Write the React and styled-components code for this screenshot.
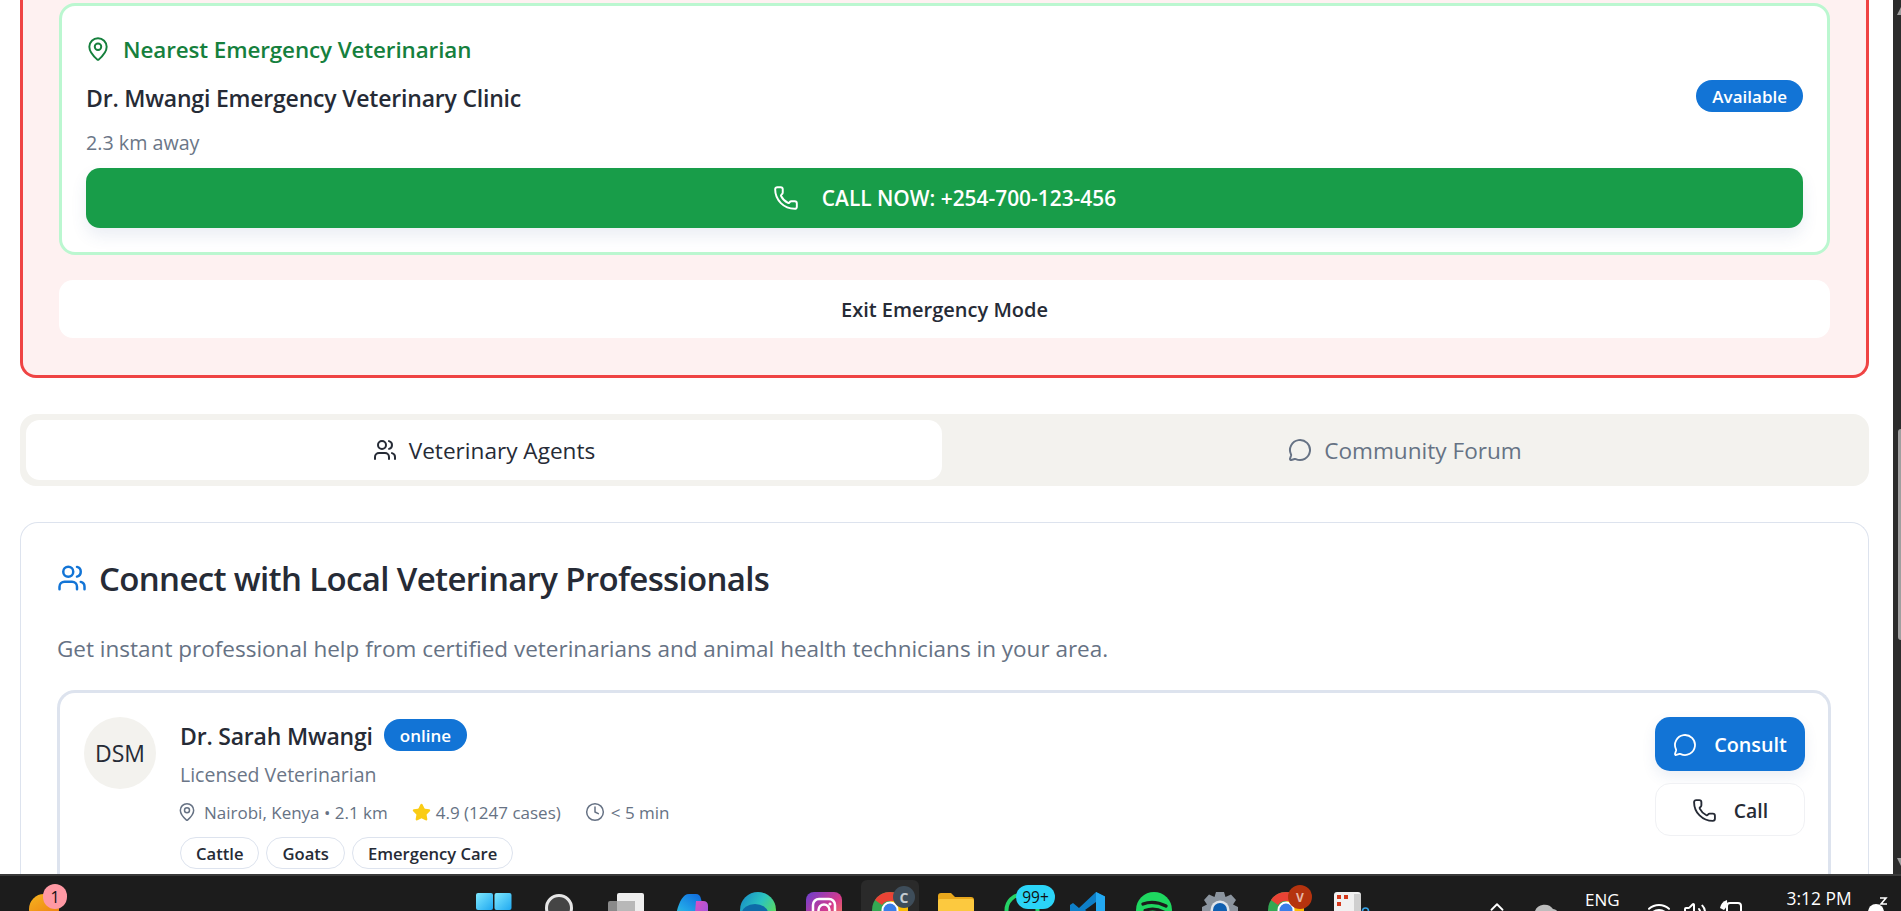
import React from 'react';
import styled, { createGlobalStyle } from 'styled-components';
import { MapPin, Phone, Users, MessageCircle, Clock, Star, Wifi, Volume2, ChevronUp } from 'lucide-react';

const GlobalStyle = createGlobalStyle`
  html, body {
    margin: 0;
    height: 100%;
    overflow: hidden;
    background: #fff;
  }
  * { box-sizing: border-box; }
  svg { flex: none; display: block; }
  body {
    font-family: "Open Sans", "Noto Sans", sans-serif;
    color: #262b36;
  }
`;

const Screen = styled.div`
  width: 1901px;
  height: 911px;
  display: flex;
  flex-direction: column;
  overflow: hidden;
`;

const Viewport = styled.div`
  flex: none;
  height: 874px;
  display: flex;
  overflow: hidden;
`;

const Page = styled.main`
  width: 1893px;
  padding: 0 24px 0 20px;
  display: flex;
  flex-direction: column;
`;

const Scrollbar = styled.div`
  width: 8px;
  background: #2c2c2c;
  flex: none;
  position: relative;
`;

const ScrollThumb = styled.div`
  position: absolute;
  left: 5px;
  top: 429px;
  width: 3px;
  height: 211px;
  border-radius: 3px 0 0 3px;
  background: #9f9f9f;
`;

const ScrollArrow = styled.div`
  position: absolute;
  left: 4px;
  top: ${p => p.$top}px;
  width: 4px;
  height: 8px;
  background: #9f9f9f;
  clip-path: ${p => (p.$down ? 'polygon(0 0, 100% 0, 100% 100%)' : 'polygon(100% 0, 100% 100%, 0 100%)')};
`;

const EmergencyPanel = styled.section`
  background: #fef1f1;
  border: 3px solid #ef4444;
  border-top: 0;
  border-radius: 0 0 16px 16px;
  padding: 3px 36px 37px;
  display: flex;
  flex-direction: column;
  gap: 25px;
`;

const VetCard = styled.div`
  background: #fff;
  border: 3px solid #bbf7d0;
  border-radius: 16px;
  padding: 24px;
  height: 252px;
`;

const VetTitle = styled.h3`
  margin: 0;
  height: 38px;
  display: flex;
  align-items: center;
  gap: 12px;
  font-size: 22.4px;
  font-weight: 600;
  color: #15803d;
  letter-spacing: -0.1px;

  svg { margin-left: -1px; }
`;

const VetRow = styled.div`
  margin-top: 12px;
  height: 32px;
  display: flex;
  align-items: center;
  justify-content: space-between;
`;

const ClinicName = styled.div`
  padding-top: 4px;
  line-height: 26px;
  font-size: 23px;
  font-weight: 600;
  letter-spacing: -0.2px;
`;

const Pill = styled.span`
  height: 32px;
  padding: 0 16px;
  border-radius: 16px;
  background: #1274d6;
  color: #fff;
  font-size: 17px;
  font-weight: 600;
  display: inline-flex;
  align-items: center;
`;

const Distance = styled.div`
  margin-top: 18px;
  height: 26px;
  line-height: 26px;
  font-size: 19.7px;
  color: #6b7687;
`;

const CallNow = styled.button`
  margin-top: 12px;
  width: 100%;
  height: 60px;
  border: 0;
  border-radius: 14px;
  background: #189d49;
  color: #fff;
  font: 600 20.9px "Open Sans", sans-serif;
  display: flex;
  align-items: center;
  justify-content: center;
  gap: 23px;
  box-shadow: 0 8px 16px rgba(60, 90, 150, 0.1);
`;

const ExitButton = styled.button`
  height: 58px;
  border: 0;
  border-radius: 14px;
  background: #fff;
  color: #262b36;
  padding-top: 2px;
  font: 600 20px "Open Sans", sans-serif;
`;

const Tabs = styled.div`
  margin-top: 36px;
  height: 72px;
  padding: 6px;
  background: #f3f2ee;
  border-radius: 16px;
  display: grid;
  grid-template-columns: 916px 1fr;
`;

const Tab = styled.div`
  border-radius: 14px;
  padding-left: ${p => (p.$active ? '0' : '5px')};
  background: ${p => (p.$active ? '#fff' : 'transparent')};
  color: ${p => (p.$active ? '#262b36' : '#667284')};
  display: flex;
  align-items: center;
  justify-content: center;
  gap: 12px;
  font-size: 22.6px;
`;

const AgentsPanel = styled.section`
  margin-top: 36px;
  flex: 1;
  border: 1px solid #dde3ee;
  border-bottom: 0;
  border-radius: 18px 18px 0 0;
  padding: 34px 37px 0 36px;
  display: flex;
  flex-direction: column;
`;

const PanelTitle = styled.h2`
  margin: 0;
  height: 42px;
  display: flex;
  align-items: center;
  gap: 12px;
  font-size: 33px;
  font-weight: 600;
  letter-spacing: -0.65px;
`;

const PanelText = styled.p`
  margin: 35px 0 0;
  height: 30px;
  line-height: 30px;
  font-size: 22.5px;
  color: #667284;
`;

const AgentCard = styled.article`
  margin-top: 26px;
  flex: 1;
  border: 3px solid #dde3ee;
  border-bottom: 0;
  border-radius: 18px 18px 0 0;
  padding: 24px 23px 0 24px;
  display: flex;
  gap: 24px;
`;

const Avatar = styled.div`
  flex: none;
  width: 72px;
  height: 72px;
  border-radius: 50%;
  background: #f3f2ee;
  display: flex;
  align-items: center;
  justify-content: center;
  font-size: 23px;
`;

const AgentBody = styled.div`
  flex: 1;
`;

const NameRow = styled.div`
  height: 32px;
  margin-top: 2px;
  display: flex;
  align-items: center;
  gap: 11px;
`;

const AgentName = styled.div`
  font-size: 23px;
  font-weight: 600;
  letter-spacing: -0.2px;
  padding-top: 1px;
`;

const Role = styled.div`
  margin-top: 11px;
  font-size: 19.5px;
  line-height: 26px;
  color: #6b7687;
`;

const MetaRow = styled.div`
  margin-top: 12px;
  height: 24px;
  display: flex;
  align-items: center;
  gap: 24px;
  font-size: 17px;
  color: #667284;
`;

const Meta = styled.span`
  display: flex;
  align-items: center;
  gap: ${p => p.$gap || 6}px;
  margin-left: ${p => p.$shift || 0}px;
`;

const TagRow = styled.div`
  margin-top: 13px;
  display: flex;
  gap: 7px;
`;

const Tag = styled.span`
  height: 32px;
  padding: 0 15px;
  border: 1px solid #dde3ee;
  border-radius: 16px;
  display: flex;
  align-items: center;
  font-size: 16.6px;
  font-weight: 600;
`;

const Actions = styled.div`
  flex: none;
  width: 150px;
  display: flex;
  flex-direction: column;
  gap: 12px;
`;

const ActionButton = styled.button`
  height: ${p => (p.$primary ? '54px' : '53px')};
  padding: 1px 0 0;
  border-radius: 15px;
  border: ${p => (p.$primary ? '0' : '1px solid #f0f1f4')};
  background: ${p => (p.$primary ? '#1274d6' : '#fff')};
  color: ${p => (p.$primary ? '#fff' : '#262b36')};
  font: 600 ${p => (p.$primary ? '19.8px' : '19.4px')} "Open Sans", sans-serif;
  display: flex;
  align-items: center;
  justify-content: center;
  gap: 17px;
  box-shadow: ${p => (p.$primary ? '0 6px 14px rgba(60, 90, 150, 0.1)' : 'none')};
`;

const Taskbar = styled.footer`
  flex: none;
  height: 37px;
  background: #1c1c1c;
  border-top: 2px solid #3a3a3a;
  overflow: hidden;
  display: flex;
  color: #fff;
`;

const WeatherSlot = styled.div`
  flex: none;
  width: 476px;
  padding: 18px 0 0 29px;
`;

const AppStrip = styled.div`
  flex: none;
  width: 1010px;
  padding-top: 16px;
  display: flex;
  gap: 30px;
`;

const AppSlot = styled.div`
  flex: none;
  width: 36px;
  height: 36px;
  position: relative;
`;

const AppGlyph = styled.div`
  position: relative;
`;

const ChromeHover = styled.div`
  position: absolute;
  left: -11px;
  top: -12px;
  width: 58px;
  height: 48px;
  border-radius: 6px;
  background: #2a2a2a;
`;

const CountBadge = styled.span`
  position: absolute;
  z-index: 1;
  top: ${p => p.$top}px;
  left: ${p => p.$left}px;
  min-width: ${p => p.$size}px;
  height: ${p => p.$height || p.$size}px;
  border-radius: 12px;
  background: ${p => p.$bg};
  color: ${p => p.$fg};
  font-family: "Open Sans", sans-serif;
  font-size: ${p => p.$font}px;
  font-weight: ${p => p.$weight || 400};
  display: flex;
  align-items: center;
  justify-content: center;
`;

const Tray = styled.div`
  flex: 1;
  display: flex;
  color: #fff;
`;

const TrayIcon = styled.div`
  flex: none;
  width: ${p => p.$width}px;
  margin-left: ${p => p.$gap}px;
  padding-top: ${p => p.$top}px;
`;

const TrayText = styled.div`
  flex: none;
  margin-left: ${p => p.$gap}px;
  padding-top: ${p => p.$top}px;
  font-family: "Open Sans", sans-serif;
  font-size: ${p => p.$size}px;
  line-height: 20px;
  white-space: nowrap;
`;

// Taskbar app icons, only the top part is visible above the screen edge
const WindowsLogo = () => (
  <svg width="36" height="36" viewBox="0 0 36 36">
    <defs>
      <linearGradient id="winTile" x1="0" y1="0" x2="1" y2="1">
        <stop offset="0" stopColor="#7fe9ff" />
        <stop offset="1" stopColor="#1fa8f0" />
      </linearGradient>
    </defs>
    <rect x="0" y="1" width="17" height="17" rx="2" fill="url(#winTile)" />
    <rect x="18.5" y="1" width="17" height="17" rx="2" fill="url(#winTile)" />
    <rect x="0" y="19.5" width="17" height="16" fill="url(#winTile)" />
    <rect x="18.5" y="19.5" width="17" height="16" fill="url(#winTile)" />
  </svg>
);

const SearchRing = () => (
  <svg width="36" height="36" viewBox="0 0 36 36">
    <circle cx="17" cy="16" r="12.5" fill="#454545" stroke="#e6e6e6" strokeWidth="3" />
  </svg>
);

const TaskView = () => (
  <svg width="36" height="36" viewBox="0 0 36 36">
    <rect x="9" y="1" width="27" height="30" rx="2" fill="#eeeeee" />
    <rect x="0" y="9" width="27" height="22" rx="2" fill="#8a8a8a" />
    <rect x="9" y="9" width="18" height="22" fill="#b8b8b8" />
  </svg>
);

const Copilot = () => (
  <svg width="36" height="36" viewBox="0 0 36 36">
    <defs>
      <linearGradient id="copA" x1="0.7" y1="0" x2="0" y2="1">
        <stop offset="0" stopColor="#1272e0" />
        <stop offset="0.5" stopColor="#22a8e8" />
        <stop offset="1" stopColor="#5fd89a" />
      </linearGradient>
      <linearGradient id="copB" x1="0" y1="0" x2="1" y2="1">
        <stop offset="0" stopColor="#e04fc0" />
        <stop offset="1" stopColor="#8a5ae8" />
      </linearGradient>
    </defs>
    <path d="M0 34 C2 20 6 2 15 2 L22 2 Q26 2 27 7 L30 18 L16 34 Z" fill="url(#copA)" />
    <path d="M22 9 L29 9 Q34 9 34 14 L34 34 L20 34 Z" fill="url(#copB)" />
  </svg>
);

const Edge = () => (
  <svg width="36" height="36" viewBox="0 0 36 36">
    <defs>
      <linearGradient id="edgeA" x1="0" y1="0" x2="1" y2="0.6">
        <stop offset="0" stopColor="#1587c8" />
        <stop offset="0.55" stopColor="#2bc3c0" />
        <stop offset="1" stopColor="#5fdc58" />
      </linearGradient>
    </defs>
    <circle cx="18" cy="18" r="18" fill="url(#edgeA)" />
    <ellipse cx="15" cy="21" rx="13" ry="9" fill="#0e6aa8" />
    <circle cx="18" cy="26" r="5" fill="#1c1c1c" />
  </svg>
);

const Instagram = () => (
  <svg width="36" height="36" viewBox="0 0 36 36">
    <defs>
      <linearGradient id="instaA" x1="0" y1="0" x2="1" y2="1">
        <stop offset="0" stopColor="#6a3fd0" />
        <stop offset="0.55" stopColor="#d63a8c" />
        <stop offset="1" stopColor="#f8a040" />
      </linearGradient>
    </defs>
    <rect width="36" height="36" rx="8" fill="url(#instaA)" />
    <rect x="7" y="7" width="22" height="22" rx="6" fill="none" stroke="#fff" strokeWidth="2.5" />
    <circle cx="18" cy="18" r="5.5" fill="none" stroke="#fff" strokeWidth="2.5" />
    <circle cx="24" cy="12" r="1.6" fill="#fff" />
  </svg>
);

const Chrome = () => (
  <svg width="36" height="36" viewBox="0 0 36 36">
    <circle cx="18" cy="18" r="18" fill="#34a853" />
    <path d="M18 0 A18 18 0 0 1 33.6 9 L18 9 A9 9 0 0 0 10 13 L3 8 A18 18 0 0 1 18 0 Z" fill="#ea4335" />
    <path d="M33.6 9 A18 18 0 0 1 18 36 L26 18 L18 9 Z" fill="#fbbc04" />
    <circle cx="18" cy="18" r="8.5" fill="#fff" />
    <circle cx="18" cy="18" r="6.5" fill="#3a7ee8" />
  </svg>
);

const Folder = () => (
  <svg width="36" height="36" viewBox="0 0 36 36">
    <path d="M0 4 Q0 1 3 1 L13 1 L17 5 L33 5 Q36 5 36 8 L36 32 L0 32 Z" fill="#e9a81c" />
    <rect x="0" y="7" width="36" height="26" rx="2" fill="#fcc93f" />
  </svg>
);

const WhatsApp = () => (
  <svg width="36" height="36" viewBox="0 0 36 36">
    <circle cx="18" cy="18" r="15.5" fill="none" stroke="#25d366" strokeWidth="4" />
  </svg>
);

const VsCode = () => (
  <svg width="36" height="36" viewBox="0 0 36 36">
    <path d="M26 0 L35 4.5 L35 31 L26 36 L9 20 L3 25 L0 22.5 L0 13 L3 11 L9 16 Z" fill="#0e7fc8" />
    <path d="M26 0 L35 4.5 L35 31 L26 36 L26 0 Z" fill="#23a9f2" />
    <path d="M26 10 L26 26 L15 18 Z" fill="#1c1c1c" />
  </svg>
);

const Spotify = () => (
  <svg width="36" height="36" viewBox="0 0 36 36">
    <circle cx="18" cy="18" r="18" fill="#1ed760" />
    <path d="M7 12 Q18 8 30 14" fill="none" stroke="#1c1c1c" strokeWidth="3.4" strokeLinecap="round" />
    <path d="M9 18.5 Q18 15 28 20" fill="none" stroke="#1c1c1c" strokeWidth="3" strokeLinecap="round" />
  </svg>
);

const Gear = () => (
  <svg width="36" height="36" viewBox="0 0 36 36">
    <path d="M14 0 L22 0 L23.5 5 L29 2.5 L34 8 L31 12.5 L36 15 L36 22 L31 24 L34 29 L29 34 L23 31 L22 36 L14 36 L13 31 L7 34 L2 29 L5 24 L0 22 L0 15 L5 12.5 L2 8 L7 2.5 L12.5 5 Z" fill="#8b949e" />
    <circle cx="18" cy="18" r="9.5" fill="#dfe4ea" />
    <circle cx="18" cy="18" r="7" fill="#0f5fb0" />
  </svg>
);

const Notepad = () => (
  <svg width="36" height="36" viewBox="0 0 36 36">
    <rect x="0" y="0" width="27" height="36" rx="3" fill="#f1f1f1" />
    <rect x="20" y="2" width="7" height="34" fill="#cfcfcf" />
    <rect x="3" y="3" width="4" height="4" fill="#d5391c" />
    <rect x="10" y="3" width="4" height="4" fill="#d5391c" />
    <rect x="3" y="10" width="4" height="4" fill="#d5391c" />
    <circle cx="31.5" cy="19" r="3" fill="none" stroke="#35a4e8" strokeWidth="1.6" />
  </svg>
);

const WeatherBall = () => (
  <svg width="30" height="30" viewBox="0 0 30 30">
    <defs>
      <linearGradient id="sunA" x1="0" y1="0" x2="0.6" y2="1">
        <stop offset="0" stopColor="#f5b51f" />
        <stop offset="1" stopColor="#ee7d12" />
      </linearGradient>
    </defs>
    <circle cx="15" cy="15" r="15" fill="url(#sunA)" />
  </svg>
);

const CloudGlyph = () => (
  <svg width="24" height="20" viewBox="0 0 24 20">
    <path d="M5 20 A5 5 0 0 1 2 9 A10 9 0 0 1 20 7 A6 6 0 0 1 19 20 Z" fill="#bdbdbd" />
  </svg>
);

const BatteryLeaf = () => (
  <svg width="24" height="22" viewBox="0 0 24 22">
    <path d="M1 8 Q2 2 8 0 Q9 6 5 10 Z" fill="#fff" />
    <rect x="8" y="3" width="14" height="18" rx="3" fill="none" stroke="#fff" strokeWidth="2" />
  </svg>
);

const SleepGlyph = () => (
  <svg width="20" height="24" viewBox="0 0 20 24">
    <circle cx="8" cy="15" r="8" fill="#fff" />
    <path d="M12 1 L18 1 L13 7 L19 7" fill="none" stroke="#fff" strokeWidth="1.6" />
  </svg>
);

const apps = [
  { key: 'win', node: <WindowsLogo /> },
  { key: 'search', node: <SearchRing /> },
  { key: 'tasks', node: <TaskView /> },
  { key: 'copilot', node: <Copilot /> },
  { key: 'edge', node: <Edge /> },
  { key: 'insta', node: <Instagram /> },
  {
    key: 'chrome1',
    node: <Chrome />,
    hover: true,
    badge: { $top: -6, $left: 21, $size: 22, $bg: '#3e4d5a', $fg: '#c5ccd2', $font: 14, $weight: 700, text: 'C' },
  },
  { key: 'folder', node: <Folder /> },
  {
    key: 'whatsapp',
    node: <WhatsApp />,
    badge: { $top: -7, $left: 12, $size: 39, $height: 24, $bg: '#2bd4f7', $fg: '#111', $font: 15.5, text: '99+' },
  },
  { key: 'vscode', node: <VsCode /> },
  { key: 'spotify', node: <Spotify /> },
  { key: 'gear', node: <Gear /> },
  {
    key: 'chrome2',
    node: <Chrome />,
    badge: { $top: -7, $left: 20, $size: 24, $bg: '#b5330e', $fg: '#e8b8a8', $font: 12, $weight: 700, text: 'V' },
  },
  { key: 'notes', node: <Notepad /> },
];

const App = () => (
  <Screen>
    <GlobalStyle />
    <Viewport>
      <Page>
        <EmergencyPanel>
          <VetCard>
            <VetTitle>
              <MapPin size={26} color="#15803d" strokeWidth={1.8} />
              Nearest Emergency Veterinarian
            </VetTitle>
            <VetRow>
              <ClinicName>Dr. Mwangi Emergency Veterinary Clinic</ClinicName>
              <Pill>Available</Pill>
            </VetRow>
            <Distance>2.3 km away</Distance>
            <CallNow>
              <Phone size={26} color="#fff" strokeWidth={1.8} />
              CALL NOW: +254-700-123-456
            </CallNow>
          </VetCard>
          <ExitButton>Exit Emergency Mode</ExitButton>
        </EmergencyPanel>

        <Tabs>
          <Tab $active>
            <Users size={24} color="#262b36" />
            Veterinary Agents
          </Tab>
          <Tab>
            <MessageCircle size={24} color="#667284" />
            Community Forum
          </Tab>
        </Tabs>

        <AgentsPanel>
          <PanelTitle>
            <Users size={30} color="#1274d6" />
            Connect with Local Veterinary Professionals
          </PanelTitle>
          <PanelText>Get instant professional help from certified veterinarians and animal health technicians in your area.</PanelText>
          <AgentCard>
            <Avatar>DSM</Avatar>
            <AgentBody>
              <NameRow>
                <AgentName>Dr. Sarah Mwangi</AgentName>
                <Pill>online</Pill>
              </NameRow>
              <Role>Licensed Veterinarian</Role>
              <MetaRow>
                <Meta $shift={-3} $gap={7}>
                  <MapPin size={20} color="#667284" strokeWidth={1.8} />
                  Nairobi, Kenya • 2.1 km
                </Meta>
                <Meta $gap={5}>
                  <Star size={19} color="#facc15" fill="#facc15" />
                  4.9 (1247 cases)
                </Meta>
                <Meta>
                  <Clock size={20} color="#667284" strokeWidth={1.8} />
                  {'< 5 min'}
                </Meta>
              </MetaRow>
              <TagRow>
                <Tag>Cattle</Tag>
                <Tag>Goats</Tag>
                <Tag>Emergency Care</Tag>
              </TagRow>
            </AgentBody>
            <Actions>
              <ActionButton $primary>
                <MessageCircle size={24} color="#fff" strokeWidth={1.8} />
                Consult
              </ActionButton>
              <ActionButton>
                <Phone size={25} color="#262b36" strokeWidth={1.8} />
                Call
              </ActionButton>
            </Actions>
          </AgentCard>
        </AgentsPanel>
      </Page>
      <Scrollbar>
        <ScrollArrow $top={7} />
        <ScrollThumb />
        <ScrollArrow $top={858} $down />
      </Scrollbar>
    </Viewport>

    <Taskbar>
      <WeatherSlot>
        <AppSlot>
          <WeatherBall />
          <CountBadge $top={-10} $left={14} $size={24} $height={25} $bg="#ff99a4" $fg="#111" $font={16}>1</CountBadge>
        </AppSlot>
      </WeatherSlot>
      <AppStrip>
        {apps.map(({ key, node, hover, badge }) => {
          const { text, ...badgeProps } = badge || {};
          return (
            <AppSlot key={key}>
              {hover && <ChromeHover />}
              <AppGlyph>{node}</AppGlyph>
              {badge && <CountBadge {...badgeProps}>{text}</CountBadge>}
            </AppSlot>
          );
        })}
      </AppStrip>
      <Tray>
        <TrayIcon $width={22} $gap={0} $top={20}>
          <ChevronUp size={22} color="#fff" />
        </TrayIcon>
        <TrayIcon $width={24} $gap={25} $top={26}>
          <CloudGlyph />
        </TrayIcon>
        <TrayText $gap={28} $top={14} $size={17}>ENG</TrayText>
        <TrayIcon $width={24} $gap={27} $top={24}>
          <Wifi size={24} color="#fff" />
        </TrayIcon>
        <TrayIcon $width={24} $gap={12} $top={24}>
          <Volume2 size={24} color="#fff" />
        </TrayIcon>
        <TrayIcon $width={24} $gap={12} $top={24}>
          <BatteryLeaf />
        </TrayIcon>
        <TrayText $gap={44} $top={12} $size={17.4}>3:12 PM</TrayText>
        <TrayIcon $width={20} $gap={16} $top={21}>
          <SleepGlyph />
        </TrayIcon>
      </Tray>
    </Taskbar>
  </Screen>
);

export default App;
